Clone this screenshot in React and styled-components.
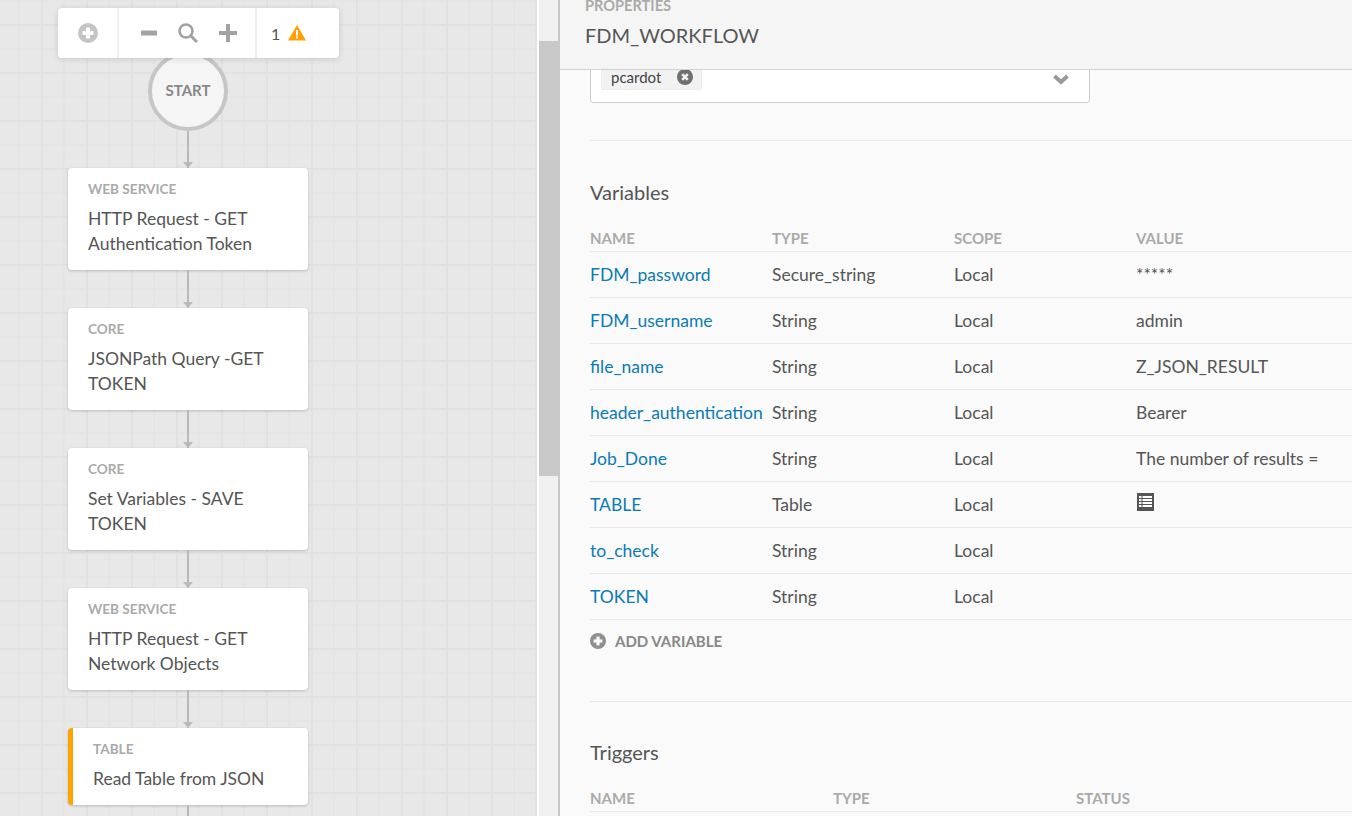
import React from "react";
import styled, { createGlobalStyle } from "styled-components";

const GlobalStyle = createGlobalStyle`
  html, body {
    margin: 0;
    padding: 0;
    height: 100%;
    overflow: hidden;
    font-family: Lato, "Open Sans", sans-serif;
    color: #555;
  }
`;

const Page = styled.div`
  display: flex;
  width: 1352px;
  height: 816px;
  overflow: hidden;
  background: #fff;
`;

/* left side: the workflow canvas */
const Canvas = styled.div`
  position: relative;
  flex: none;
  width: 537px;
  height: 816px;
  box-sizing: border-box;
  overflow: hidden;
  padding: 51px 0 0 68px;
  border-right: 2px solid #e2e2e2;
  background-color: #e8e8e8;
  background-image:
    linear-gradient(90deg, #e1e1e1 2px, transparent 2px),
    linear-gradient(90deg, #e2e2e2 1px, transparent 1px),
    linear-gradient(#e1e1e1 2px, transparent 2px),
    linear-gradient(#e2e2e2 1px, transparent 1px);
  background-size: 45px 48px, 22.5px 24px, 45px 48px, 22.5px 24px;
  background-position: 41px 0, 18.5px 0, 0 24px, 0 0.5px;
`;

const Toolbar = styled.div`
  position: absolute;
  top: 8px;
  left: 58px;
  display: flex;
  width: 281px;
  height: 50px;
  background: #fff;
  border-radius: 4px;
  box-shadow: 0 1px 6px rgba(0, 0, 0, 0.14);
  z-index: 2;
`;

const ToolGroup = styled.div`
  display: flex;
  align-items: center;
  box-sizing: border-box;
  width: ${({ $width }) => $width}px;
  padding-left: ${({ $pad }) => $pad}px;
  gap: ${({ $gap }) => $gap || 0}px;
  border-right: ${({ $last }) => ($last ? "none" : "2px solid #f0f0f0")};
`;

const WarnCount = styled.span`
  font-size: 16px;
  color: #555;
  margin-right: 8px;
`;

const Flow = styled.div`
  display: flex;
  flex-direction: column;
  align-items: center;
  width: 240px;
`;

const StartNode = styled.div`
  display: flex;
  align-items: center;
  justify-content: center;
  box-sizing: border-box;
  width: 80px;
  height: 80px;
  padding-bottom: 3px;
  border: 4px solid #c6c6c8;
  border-radius: 50%;
  background: #f5f5f5;
  color: #888;
  font-size: 15px;
  font-weight: 700;
`;

const Connector = styled.div`
  position: relative;
  flex: none;
  width: 2px;
  height: ${({ $height }) => $height || 37}px;
  background: #b9b9b9;

  &::after {
    content: "";
    display: ${({ $open }) => ($open ? "none" : "block")};
    position: absolute;
    bottom: 0;
    left: -4px;
    border-left: 5px solid transparent;
    border-right: 5px solid transparent;
    border-top: 6px solid #b9b9b9;
  }
`;

const Card = styled.div`
  flex: none;
  box-sizing: border-box;
  width: 240px;
  padding: 13px 20px 14px 20px;
  background: #fff;
  border-left: ${({ $warn }) => ($warn ? "5px solid #ffa300" : "none")};
  border-radius: 4px;
  box-shadow: 0 1px 3px rgba(0, 0, 0, 0.2);
`;

const CardKind = styled.div`
  font-size: 13.6px;
  line-height: 16px;
  font-weight: 700;
  color: #aaa;
  margin-bottom: 9px;
`;

const CardTitle = styled.div`
  font-size: 17.5px;
  line-height: 25px;
  color: #555;
`;

/* scrollbar between canvas and panel */
const ScrollTrack = styled.div`
  flex: none;
  box-sizing: border-box;
  width: 21px;
  height: 816px;
  margin-left: 2px;
  padding-top: 41px;
  background: #f0f0f0;
  border-right: 2px solid #c8c8c8;
`;

const ScrollThumb = styled.div`
  height: 435px;
  background: #c8c8c8;
`;

/* right side: properties */
const Panel = styled.div`
  flex: 1;
  display: flex;
  flex-direction: column;
  min-width: 0;
  height: 816px;
  background: #fafafa;
`;

const PanelHeader = styled.div`
  flex: none;
  position: relative;
  z-index: 1;
  box-sizing: border-box;
  height: 70px;
  padding-left: 25px;
  overflow: hidden;
  background: #f5f5f5;
  border-bottom: 1px solid #d2d2d2;
`;

const HeaderLabel = styled.div`
  margin-top: -3px;
  font-size: 14.6px;
  line-height: 17px;
  font-weight: 700;
  color: #aaa;
`;

const HeaderTitle = styled.div`
  margin-top: 9px;
  font-size: 20px;
  line-height: 24px;
  color: #555;
`;

const PanelBody = styled.div`
  flex: 1;
  min-height: 0;
  overflow: hidden;
  padding-left: 30px;
`;

const SelectBox = styled.div`
  display: flex;
  align-items: flex-start;
  justify-content: space-between;
  box-sizing: border-box;
  width: 500px;
  height: 50px;
  margin-top: -17px;
  padding: 9px 20px 0 10px;
  background: #fff;
  border: 1px solid #ccc;
  border-radius: 3px;
`;

const Chip = styled.div`
  display: flex;
  align-items: center;
  justify-content: space-between;
  box-sizing: border-box;
  width: 101px;
  height: 27px;
  padding: 0 8px 0 9px;
  background: #f2f2f2;
  border: 1px solid #ececec;
  border-radius: 2px;
  font-size: 15px;
  color: #444;
`;

const ChevronSlot = styled.div`
  margin-top: 11px;
  display: flex;
`;

const Rule = styled.div`
  height: 1px;
  background: #e8e8e8;
  margin-top: ${({ $top }) => $top}px;
`;

const SectionTitle = styled.h3`
  margin: ${({ $top }) => $top}px 0 0;
  font-size: 20px;
  line-height: 24px;
  font-weight: 400;
  color: #555;
`;

const HeadRow = styled.div`
  display: grid;
  grid-template-columns: repeat(auto-fill, ${({ $col }) => $col}px);
  align-items: center;
  box-sizing: content-box;
  height: 20px;
  margin-top: 24px;
  padding-bottom: 3px;
  border-bottom: 1px solid #e8e8e8;
  font-size: 15px;
  font-weight: 700;
  color: #aaa;
`;

const Row = styled.div`
  display: grid;
  grid-template-columns: repeat(4, 182px);
  align-items: center;
  box-sizing: border-box;
  height: 46px;
  border-bottom: 1px solid #e8e8e8;
  font-size: 17.5px;
  color: #555;
  white-space: nowrap;
`;

const NameLink = styled.a`
  color: #0a7ab5;
  text-decoration: none;
`;

const ValueIcon = styled.span`
  display: flex;
  margin: -5px 0 0 1px;
`;

const AddRow = styled.div`
  display: flex;
  align-items: center;
  gap: 9px;
  margin-top: 11px;
  height: 20px;
  font-size: 15px;
  font-weight: 700;
  color: #888;
`;

const PlusCircle = ({ size, color, bar }) => (
  <svg width={size} height={size} viewBox="0 0 20 20">
    <circle cx="10" cy="10" r="10" fill={color} />
    <rect x="4.5" y="8" width="11" height="4" fill={bar} />
    <rect x="8" y="4.5" width="4" height="11" fill={bar} />
  </svg>
);

const MinusIcon = () => (
  <svg width="16" height="6" viewBox="0 0 16 6">
    <rect width="16" height="5" y="0.5" fill="#a2a2a2" />
  </svg>
);

const PlusIcon = () => (
  <svg width="18" height="18" viewBox="0 0 18 18">
    <rect y="7" width="18" height="4" fill="#a2a2a2" />
    <rect x="7" width="4" height="18" fill="#a2a2a2" />
  </svg>
);

const SearchIcon = () => (
  <svg width="20" height="20" viewBox="0 0 20 20">
    <circle cx="8" cy="8" r="6.5" fill="none" stroke="#a2a2a2" strokeWidth="2.6" />
    <path d="M12.5 12.5 L19 19" stroke="#a2a2a2" strokeWidth="3" />
  </svg>
);

const WarningIcon = () => (
  <svg width="18" height="16" viewBox="0 0 18 16">
    <path d="M9 0 L18 15.5 H0 Z" fill="#ffa000" />
    <rect x="8" y="5" width="2" height="5.5" fill="#fff" />
    <rect x="8" y="11.5" width="2" height="2" fill="#fff" />
  </svg>
);

const CloseCircle = () => (
  <svg width="16" height="16" viewBox="0 0 16 16">
    <circle cx="8" cy="8" r="8" fill="#6f6f6f" />
    <path d="M5.2 5.2 L10.8 10.8 M10.8 5.2 L5.2 10.8" stroke="#f2f2f2" strokeWidth="2.6" />
  </svg>
);

const Chevron = () => (
  <svg width="16" height="11" viewBox="0 0 16 11">
    <path d="M1.5 2 L8 8 L14.5 2" fill="none" stroke="#9a9a9a" strokeWidth="4" />
  </svg>
);

const TableIcon = () => (
  <svg width="17" height="18" viewBox="0 0 17 18">
    <rect width="17" height="18" fill="#555" />
    {[3, 6, 9, 12].map((y) => (
      <React.Fragment key={y}>
        <rect x="2" y={y} width="2.5" height="2" fill="#fff" />
        <rect x="5.5" y={y} width="9.5" height="2" fill="#fff" />
      </React.Fragment>
    ))}
  </svg>
);

const steps = [
  { kind: "WEB SERVICE", lines: ["HTTP Request - GET", "Authentication Token"] },
  { kind: "CORE", lines: ["JSONPath Query -GET", "TOKEN"] },
  { kind: "CORE", lines: ["Set Variables - SAVE", "TOKEN"] },
  { kind: "WEB SERVICE", lines: ["HTTP Request - GET", "Network Objects"] },
  { kind: "TABLE", lines: ["Read Table from JSON"], warn: true },
];

const variables = [
  ["FDM_password", "Secure_string", "Local", "*****"],
  ["FDM_username", "String", "Local", "admin"],
  ["file_name", "String", "Local", "Z_JSON_RESULT"],
  ["header_authentication", "String", "Local", "Bearer"],
  ["Job_Done", "String", "Local", "The number of results ="],
  ["TABLE", "Table", "Local", "table"],
  ["to_check", "String", "Local", ""],
  ["TOKEN", "String", "Local", ""],
];

export default function App() {
  return (
    <Page>
      <GlobalStyle />
      <Canvas>
        <Toolbar>
          <ToolGroup $width={61} $pad={20}>
            <PlusCircle size={20} color="#c4c4c4" bar="#fff" />
          </ToolGroup>
          <ToolGroup $width={138} $pad={22} $gap={21}>
            <MinusIcon />
            <SearchIcon />
            <PlusIcon />
          </ToolGroup>
          <ToolGroup $width={82} $pad={14} $last>
            <WarnCount>1</WarnCount>
            <WarningIcon />
          </ToolGroup>
        </Toolbar>
        <Flow>
          <StartNode>START</StartNode>
          {steps.map((step, i) => (
            <React.Fragment key={step.lines[0] + step.kind}>
              <Connector $height={i === 0 ? 37 : 38} />
              <Card $warn={step.warn}>
                <CardKind>{step.kind}</CardKind>
                {step.lines.map((line) => (
                  <CardTitle key={line}>{line}</CardTitle>
                ))}
              </Card>
            </React.Fragment>
          ))}
          <Connector $height={12} $open />
        </Flow>
      </Canvas>
      <ScrollTrack>
        <ScrollThumb />
      </ScrollTrack>
      <Panel>
        <PanelHeader>
          <HeaderLabel>PROPERTIES</HeaderLabel>
          <HeaderTitle>FDM_WORKFLOW</HeaderTitle>
        </PanelHeader>
        <PanelBody>
          <SelectBox>
            <Chip>
              pcardot
              <CloseCircle />
            </Chip>
            <ChevronSlot>
              <Chevron />
            </ChevronSlot>
          </SelectBox>
          <Rule $top={37} />
          <SectionTitle $top={39}>Variables</SectionTitle>
          <HeadRow $col={182}>
            <span>NAME</span>
            <span>TYPE</span>
            <span>SCOPE</span>
            <span>VALUE</span>
          </HeadRow>
          {variables.map(([name, type, scope, value]) => (
            <Row key={name}>
              <NameLink>{name}</NameLink>
              <span>{type}</span>
              <span>{scope}</span>
              {value === "table" ? (
                <ValueIcon>
                  <TableIcon />
                </ValueIcon>
              ) : (
                <span>{value}</span>
              )}
            </Row>
          ))}
          <AddRow>
            <PlusCircle size={16} color="#8f8f8f" bar="#fafafa" />
            ADD VARIABLE
          </AddRow>
          <Rule $top={50} />
          <SectionTitle $top={38}>Triggers</SectionTitle>
          <HeadRow $col={243}>
            <span>NAME</span>
            <span>TYPE</span>
            <span>STATUS</span>
          </HeadRow>
        </PanelBody>
      </Panel>
    </Page>
  );
}
